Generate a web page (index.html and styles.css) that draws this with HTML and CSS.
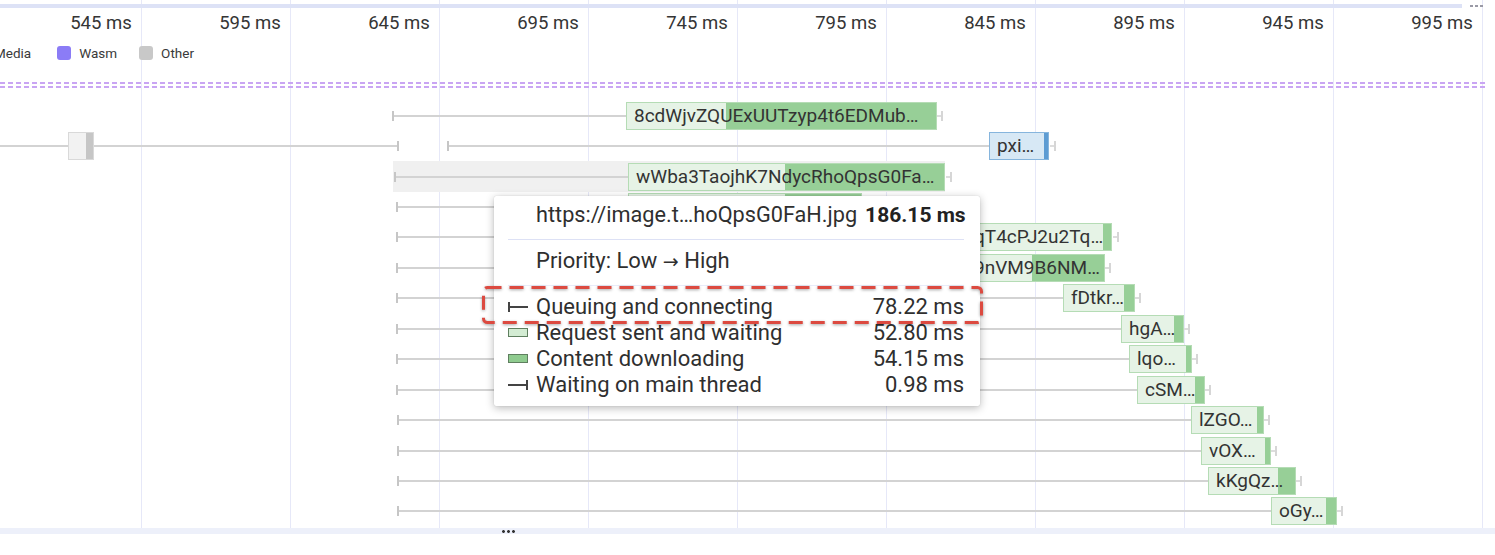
FILE: index.html
```html
<!DOCTYPE html>
<html>
<head>
<meta charset="utf-8">
<link rel="stylesheet" href="styles.css">
</head>
<body>
<div class="timeline">
  <div class="topband"><div class="band-line"></div><div class="band-dots"></div></div>
  <div class="ruler">
    <div class="tick-label">545 ms</div>
    <div class="tick-label">595 ms</div>
    <div class="tick-label">645 ms</div>
    <div class="tick-label">695 ms</div>
    <div class="tick-label">745 ms</div>
    <div class="tick-label">795 ms</div>
    <div class="tick-label">845 ms</div>
    <div class="tick-label">895 ms</div>
    <div class="tick-label">945 ms</div>
    <div class="tick-label">995 ms</div>
  </div>
  <div class="legend">
    <span class="swatch media"></span><span class="legend-text first">Media</span>
    <span class="swatch wasm"></span><span class="legend-text">Wasm</span>
    <span class="swatch other"></span><span class="legend-text">Other</span>
  </div>
  <div class="markers"><div class="marker-line"></div><div class="marker-line"></div></div>
  <div class="tracks">
    <div class="row">
      <div class="line start" style="left:392px;width:234px"></div>
      <div class="bar green" style="left:626px;width:311px;--split:99px">8cdWjvZQUExUUTzyp4t6EDMub…</div>
      <div class="cap" style="left:937px"></div>
    </div>
    <div class="row">
      <div class="line end" style="left:-10px;width:409px"></div>
      <div class="bar gray" style="left:68px;width:26px"></div>
      <div class="line start" style="left:447px;width:542px"></div>
      <div class="bar blue" style="left:989px;width:60px">pxi…</div>
      <div class="cap" style="left:1050px"></div>
    </div>
    <div class="row">
      <div class="hl" style="left:393px;width:552px"></div>
      <div class="line start" style="left:394px;width:234px"></div>
      <div class="bar green" style="left:628px;width:317px;--split:156px">wWba3TaojhK7NdycRhoQpsG0Fa…</div>
      <div class="cap" style="left:946px"></div>
    </div>
    <div class="row">
      <div class="line start" style="left:396px;width:232px"></div>
      <div class="bar green" style="left:628px;width:234px;--split:156px"></div>
      <div class="cap" style="left:863px"></div>
    </div>
    <div class="row">
      <div class="line start" style="left:396px;width:570px"></div>
      <div class="bar green" style="left:966px;width:146px;--split:136px">qT4cPJ2u2Tq…</div>
      <div class="cap" style="left:1113px"></div>
    </div>
    <div class="row">
      <div class="line start" style="left:396px;width:570px"></div>
      <div class="bar green" style="left:966px;width:139px;--split:65px">9nVM9B6NM…</div>
      <div class="cap" style="left:1105px"></div>
    </div>
    <div class="row">
      <div class="line start" style="left:396px;width:667px"></div>
      <div class="bar green" style="left:1063px;width:72px;--split:60px">fDtkr…</div>
      <div class="cap" style="left:1135px"></div>
    </div>
    <div class="row">
      <div class="line start" style="left:396px;width:725px"></div>
      <div class="bar green" style="left:1121px;width:63px;--split:52px">hgA…</div>
      <div class="cap" style="left:1184px"></div>
    </div>
    <div class="row">
      <div class="line start" style="left:396px;width:733px"></div>
      <div class="bar green" style="left:1129px;width:63px;--split:56px">lqo…</div>
      <div class="cap" style="left:1192px"></div>
    </div>
    <div class="row">
      <div class="line start" style="left:396px;width:741px"></div>
      <div class="bar green" style="left:1137px;width:68px;--split:57px">cSM…</div>
      <div class="cap" style="left:1205px"></div>
    </div>
    <div class="row">
      <div class="line start" style="left:397px;width:794px"></div>
      <div class="bar green" style="left:1191px;width:73px;--split:65px">lZGO…</div>
      <div class="cap" style="left:1264px"></div>
    </div>
    <div class="row">
      <div class="line start" style="left:397px;width:804px"></div>
      <div class="bar green" style="left:1201px;width:70px;--split:63px">vOX…</div>
      <div class="cap" style="left:1271px"></div>
    </div>
    <div class="row">
      <div class="line start" style="left:397px;width:811px"></div>
      <div class="bar green" style="left:1208px;width:88px;--split:69px">kKgQz…</div>
      <div class="cap" style="left:1296px"></div>
    </div>
    <div class="row">
      <div class="line start" style="left:397px;width:874px"></div>
      <div class="bar green" style="left:1271px;width:66px;--split:54px">oGy…</div>
      <div class="cap" style="left:1337px"></div>
    </div>
    <div class="row">
      <div class="line start" style="left:397px;width:878px"></div>
      <div class="bar green" style="left:1275px;width:73px;--split:60px"></div>
    </div>
  </div>

  <div class="tooltip">
    <div class="tt-grid">
      <span></span><span class="tt-url">https://image.t…hoQpsG0FaH.jpg</span><span class="tt-total">186.15 ms</span>
    </div>
    <div class="tt-sep"></div>
    <div class="tt-prio">Priority: Low <span class="arrow">→</span> High</div>
    <div class="tt-sep light"></div>
    <div class="tt-grid phases">
      <span class="ico queue"></span><span>Queuing and connecting</span><span class="val">78.22 ms</span>
      <span class="ico req"></span><span>Request sent and waiting</span><span class="val">52.80 ms</span>
      <span class="ico dl"></span><span>Content downloading</span><span class="val">54.15 ms</span>
      <span class="ico wait"></span><span>Waiting on main thread</span><span class="val">0.98 ms</span>
    </div>
  </div>

  <svg class="callout" width="502" height="40" viewBox="0 0 502 40">
    <rect x="1.5" y="1.5" width="498" height="35" rx="4" ry="4" fill="none" stroke="#dc4a40" stroke-width="3" stroke-dasharray="14 8"/>
  </svg>
</div>
<div class="footer"><span class="more"></span></div>
</body>
</html>
```

FILE: styles.css
```css
html, body {
  margin: 0;
  padding: 0;
  background: #ffffff;
}
body {
  width: 1495px;
  height: 555px;
  overflow: hidden;
  font-family: Roboto, "Noto Sans", sans-serif;
  color: #333333;
}
.timeline {
  position: relative;
  height: 528px;
  overflow: hidden;
  background-image: linear-gradient(to right, #e6e8f8 0, #e6e8f8 1px, transparent 1px);
  background-size: 149px 100%;
  background-position: 141px 0;
  background-repeat: repeat-x;
}
.topband {
  display: flex;
  align-items: center;
  margin-top: 4px;
  height: 4px;
}
.band-line {
  flex: 0 0 1462px;
  height: 4px;
  background: #dde2f6;
}
.band-dots {
  margin-left: 8px;
  width: 15px;
  height: 2px;
  background: repeating-linear-gradient(to right, #9a9aa6 0 3px, transparent 3px 5px);
}
.ruler {
  display: flex;
  margin-left: -7.3px;
  height: 30px;
  background: #ffffff;
}
.tick-label {
  flex: 0 0 149px;
  box-sizing: border-box;
  text-align: right;
  padding-right: 9px;
  font-size: 18.5px;
  line-height: 30px;
  color: #353535;
  border-right: 1px solid #e6e8f8;
}
.legend {
  display: flex;
  align-items: center;
  height: 30px;
  margin-left: -28px;
  font-size: 13.5px;
  color: #3a3a3a;
}
.swatch {
  width: 14px;
  height: 14px;
  border-radius: 3px;
  margin-right: 8px;
}
.swatch.media { background: #3fb6a8; }
.swatch.wasm { background: #8b7cf6; }
.swatch.other { background: #c8c8c8; }
.legend-text {
  margin-right: 22px;
}
.legend-text.first {
  margin-right: 26px;
}
.markers {
  margin-top: 14px;
  display: flex;
  flex-direction: column;
  gap: 2px;
  width: 1487px;
}
.marker-line {
  height: 2px;
  background: repeating-linear-gradient(to right, #c9a5f3 0 5px, transparent 5px 8px);
}
.tracks {
  margin-top: 12.5px;
}
.row {
  position: relative;
  height: 30.45px;
}
.hl {
  position: absolute;
  top: 0;
  bottom: 0;
  background: #f0f0f0;
}
.line {
  position: absolute;
  top: calc(50% - 1px);
  height: 2px;
  background: #d3d3d3;
}
.line.start::before,
.line.end::after {
  content: "";
  position: absolute;
  top: -4px;
  width: 2px;
  height: 10px;
  background: #c6c6c6;
}
.line.start::before { left: 0; }
.line.end::after { right: 0; }
.bar {
  position: absolute;
  top: 1.2px;
  height: 28px;
  box-sizing: border-box;
  border: 1px solid #b5dcb5;
  padding-left: 7px;
  font-size: 19px;
  line-height: 26px;
  white-space: nowrap;
  overflow: hidden;
  color: #333333;
}
.bar.green {
  background: linear-gradient(to right, #e6f3e6 var(--split), #97cf97 var(--split));
}
.bar.blue {
  border-color: #86b5dd;
  background: linear-gradient(to right, #d7e8f5 calc(100% - 4px), #5d9cd3 calc(100% - 4px));
}
.bar.gray {
  border-color: #d9d9d9;
  background: linear-gradient(to right, #f2f2f2 calc(100% - 7px), #c6c6c6 calc(100% - 7px));
}
.cap {
  position: absolute;
  top: calc(50% - 1px);
  width: 6px;
  height: 2px;
  background: #dddddd;
}
.cap::after {
  content: "";
  position: absolute;
  right: 0;
  top: -4px;
  width: 2px;
  height: 10px;
  background: #d6d6d6;
}
.tooltip {
  position: absolute;
  left: 494px;
  top: 196px;
  width: 486px;
  height: 210px;
  box-sizing: border-box;
  padding: 6px 16px 8px 14px;
  background: #ffffff;
  border-radius: 2px;
  box-shadow: 0 2px 8px rgba(0, 0, 0, 0.28), 0 0 1px rgba(0, 0, 0, 0.2);
  font-size: 22px;
  color: #2f2f2f;
  z-index: 2;
}
.tt-grid {
  display: grid;
  grid-template-columns: 20px 1fr auto;
  column-gap: 8px;
  align-items: center;
  line-height: 26px;
  white-space: nowrap;
}
.tt-url {
  white-space: nowrap;
  font-size: 21.7px;
}
.tt-total {
  font-weight: 700;
  color: #222222;
  white-space: nowrap;
  font-size: 21px;
}
.tt-sep {
  height: 1px;
  margin-top: 11px;
  background: #dde1f5;
}
.tt-sep.light {
  background: #e9ecf9;
}
.tt-prio {
  margin-top: 8px;
  padding-left: 28px;
  line-height: 26px;
}
.arrow {
  font-family: "DejaVu Sans", sans-serif;
  font-size: 19px;
}
.phases {
  margin-top: 7.7px;
}
.val {
  text-align: right;
}
.ico {
  position: relative;
  width: 20px;
  height: 9px;
  box-sizing: border-box;
}
.ico.queue,
.ico.wait {
  height: 10px;
}
.ico.queue::before,
.ico.wait::before {
  content: "";
  position: absolute;
  left: 0;
  right: 0;
  top: 4px;
  height: 2px;
  background: #444444;
}
.ico.queue::after,
.ico.wait::after {
  content: "";
  position: absolute;
  top: 0;
  width: 2px;
  height: 10px;
  background: #444444;
}
.ico.queue::after { left: 0; }
.ico.wait::after { right: 0; }
.ico.req {
  border: 1px solid #5f7f5f;
  background: #d3ecd3;
}
.ico.dl {
  border: 1px solid #5f7f5f;
  background: #8fcb8f;
}
.callout {
  position: absolute;
  left: 482px;
  top: 285.5px;
  z-index: 3;
  filter: drop-shadow(0 1px 1.5px rgba(0, 0, 0, 0.35));
}
.footer {
  height: 6px;
  background: #edf0fa;
  padding-top: 2px;
  box-sizing: border-box;
}
.more {
  display: block;
  margin-left: 501px;
  width: 15px;
  height: 3px;
  background: radial-gradient(circle, #333333 1.2px, transparent 1.6px) 0 0 / 5px 3px repeat-x;
}
```
